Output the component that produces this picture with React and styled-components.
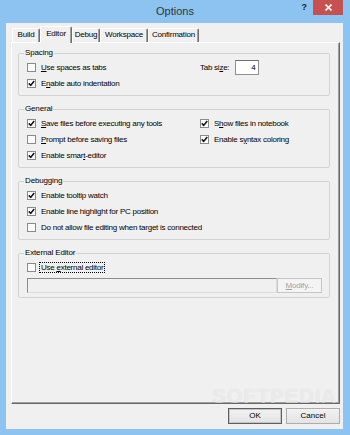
import React from "react";
import styled, { createGlobalStyle } from "styled-components";

const GlobalStyle = createGlobalStyle`
  html, body {
    margin: 0;
    padding: 0;
  }
  body {
    width: 350px;
    height: 435px;
    overflow: hidden;
    background: #8cc3f0;
    font-family: "Liberation Sans", Arial, sans-serif;
    color: #000;
  }
`;

const Window = styled.div`
  position: relative;
  width: 350px;
  height: 435px;
  display: flex;
  flex-direction: column;
  background: #8cc3f0;
`;

const TitleBar = styled.div`
  height: 23px;
  flex-shrink: 0;
  display: grid;
  grid-template-columns: 1fr auto 1fr;
  align-items: start;
`;

const Title = styled.div`
  grid-column: 2;
  font-size: 11px;
  line-height: 22px;
  color: #333;
`;

const Caption = styled.div`
  grid-column: 3;
  justify-self: end;
  display: flex;
  align-items: flex-start;
`;

const Help = styled.span`
  font-size: 9px;
  font-weight: bold;
  line-height: 15px;
  color: #222;
  margin-right: 6px;
`;

const Close = styled.div`
  width: 30px;
  height: 15px;
  margin-right: 7px;
  background: #c75050;
  display: flex;
  align-items: center;
  justify-content: center;
`;

const Client = styled.div`
  flex: 1;
  margin: 0 7px 6px 6px;
  padding: 3px 3px 0 5px;
  background: #f0f0f0;
  display: flex;
  flex-direction: column;
  box-sizing: border-box;
`;

const TabStrip = styled.div`
  height: 16px;
  flex-shrink: 0;
  display: flex;
  align-items: flex-end;
  padding-left: 1px;
  position: relative;
  z-index: 1;
`;

const Tab = styled.div`
  width: ${p => p.$w}px;
  height: ${p => (p.$active ? 17 : 14)}px;
  margin-bottom: ${p => (p.$active ? -1 : 0)}px;
  box-sizing: border-box;
  border: 1px solid;
  border-color: #fff #6d6d6d transparent #fff;
  border-bottom: none;
  border-radius: 2px 2px 0 0;
  box-shadow: inset -1px 0 0 #a0a0a0;
  background: #f0f0f0;
  font-size: 8px;
  letter-spacing: -0.2px;
  line-height: ${p => (p.$active ? 13 : 12)}px;
  text-align: center;
`;

const Panel = styled.div`
  flex: 1;
  box-sizing: border-box;
  border: 1px solid;
  border-color: #fff #696969 #696969 #fff;
  box-shadow: inset -1px -1px 0 #a0a0a0;
  padding: 5px 9px 0 6px;
  display: flex;
  flex-direction: column;
  gap: 8px;
`;

const Group = styled.fieldset`
  margin: 0;
  padding: 0;
  min-width: 0;
  border: 1px solid #d3d3d3;
  border-radius: 2px;
`;

const Legend = styled.legend`
  margin-left: 5px;
  padding: 0 1px;
  font-size: 8px;
  line-height: 10px;
  letter-spacing: -0.15px;
`;

const GroupBody = styled.div`
  display: grid;
  grid-template-columns: ${p => p.$cols || "1fr"};
  grid-auto-rows: 16px;
  padding: 1px 7px ${p => p.$bottom ?? 4}px 8px;
`;

const Row = styled.label`
  display: flex;
  align-items: center;
  gap: 4px;
  font-size: 8px;
  letter-spacing: -0.25px;
  white-space: nowrap;
`;

const Box = styled.span`
  width: 9px;
  height: 9px;
  flex-shrink: 0;
  box-sizing: border-box;
  border: 1px solid #8a8a8a;
  background: #fff;
  display: flex;
  align-items: center;
  justify-content: center;
`;

const Text = styled.span`
  padding: 0 1px;
  outline: ${p => (p.$focus ? "1px dotted #000" : "none")};
  line-height: 9px;
`;

const TabSize = styled.div`
  display: flex;
  align-items: center;
  gap: 6px;
  font-size: 8px;
  letter-spacing: -0.25px;
`;

const NumberBox = styled.div`
  width: 24px;
  height: 15px;
  box-sizing: border-box;
  border: 1px solid #8e8f8f;
  border-top-color: #6f6f6f;
  background: #fff;
  text-align: right;
  padding-right: 3px;
  line-height: 13px;
  font-size: 8px;
`;

const FieldRow = styled.div`
  display: flex;
  height: 15px;
  margin-top: 3px;
`;

const PathField = styled.div`
  flex: 1;
  box-sizing: border-box;
  border: 1px solid;
  border-color: #8c8c8c #dcdcdc #dcdcdc #8c8c8c;
  background: #f0f0f0;
`;

const SideButton = styled.div`
  width: 45px;
  box-sizing: border-box;
  border: 1px solid #c6c6c6;
  background: #f4f4f4;
  color: #a3a3a3;
  font-size: 8px;
  letter-spacing: -0.2px;
  line-height: 13px;
  text-align: center;
`;

const Footer = styled.div`
  flex-shrink: 0;
  display: flex;
  justify-content: flex-end;
  gap: 4px;
  padding: 4px 0 5px;
`;

const Button = styled.div`
  width: 54px;
  height: 16px;
  box-sizing: border-box;
  border: 1px solid ${p => (p.$primary ? "#5f5f5f" : "#adadad")};
  box-shadow: ${p => (p.$primary ? "inset 0 0 0 1px #c4c4c4" : "none")};
  background: linear-gradient(#f2f2f2, #e3e3e3);
  font-size: 8px;
  line-height: 14px;
  text-align: center;
`;

const Watermark = styled.div`
  position: absolute;
  left: 212px;
  top: 384px;
  font-size: 21px;
  font-weight: bold;
  letter-spacing: 0.5px;
  color: rgba(255, 255, 255, 0.55);
  text-shadow: 0 0 1px rgba(0, 0, 0, 0.12);
  pointer-events: none;
`;

const Tick = () => (
  <svg width="7" height="7" viewBox="0 0 7 7">
    <path d="M0.8 3.4 L2.7 5.4 L6.2 1" fill="none" stroke="#111" strokeWidth="1.6" />
  </svg>
);

const Check = ({ checked, focus, children }) => (
  <Row>
    <Box>{checked && <Tick />}</Box>
    <Text $focus={focus}>{children}</Text>
  </Row>
);

const tabs = [
  ["Build", 28],
  ["Editor", 32],
  ["Debug", 28],
  ["Workspace", 48],
  ["Confirmation", 51],
];

export default function App() {
  return (
    <Window>
      <GlobalStyle />
      <TitleBar>
        <Title>Options</Title>
        <Caption>
          <Help>?</Help>
          <Close>
            <svg width="7" height="7" viewBox="0 0 7 7">
              <path d="M0.5 0.5 L6.5 6.5 M6.5 0.5 L0.5 6.5" stroke="#fff" strokeWidth="1.6" />
            </svg>
          </Close>
        </Caption>
      </TitleBar>
      <Client>
        <TabStrip>
          {tabs.map(([name, w]) => (
            <Tab key={name} $w={w} $active={name === "Editor"}>
              {name}
            </Tab>
          ))}
        </TabStrip>
        <Panel>
          <Group>
            <Legend>Spacing</Legend>
            <GroupBody $cols="173px 1fr">
              <Check>
                <u>U</u>se spaces as tabs
              </Check>
              <TabSize>
                <span>
                  Tab si<u>z</u>e:
                </span>
                <NumberBox>4</NumberBox>
              </TabSize>
              <Check checked>
                E<u>n</u>able auto indentation
              </Check>
            </GroupBody>
          </Group>
          <Group>
            <Legend>General</Legend>
            <GroupBody $cols="173px 1fr">
              <Check checked>
                <u>S</u>ave files before executing any tools
              </Check>
              <Check checked>
                S<u>h</u>ow files in notebook
              </Check>
              <Check>
                <u>P</u>rompt before saving files
              </Check>
              <Check checked>
                Enable s<u>y</u>ntax coloring
              </Check>
              <Check checked>
                Enable smar<u>t</u>-editor
              </Check>
            </GroupBody>
          </Group>
          <Group>
            <Legend>Debugging</Legend>
            <GroupBody>
              <Check checked>Enable tooltip watch</Check>
              <Check checked>Enable line highlight for PC position</Check>
              <Check>Do not allow file editing when target is connected</Check>
            </GroupBody>
          </Group>
          <Group>
            <Legend>External Editor</Legend>
            <GroupBody $bottom={6}>
              <Check focus>
                Use <u>e</u>xternal editor
              </Check>
              <FieldRow>
                <PathField />
                <SideButton>
                  <u>M</u>odify...
                </SideButton>
              </FieldRow>
            </GroupBody>
          </Group>
        </Panel>
        <Footer>
          <Button $primary>OK</Button>
          <Button>Cancel</Button>
        </Footer>
      </Client>
      <Watermark>SOFTPEDIA</Watermark>
    </Window>
  );
}
